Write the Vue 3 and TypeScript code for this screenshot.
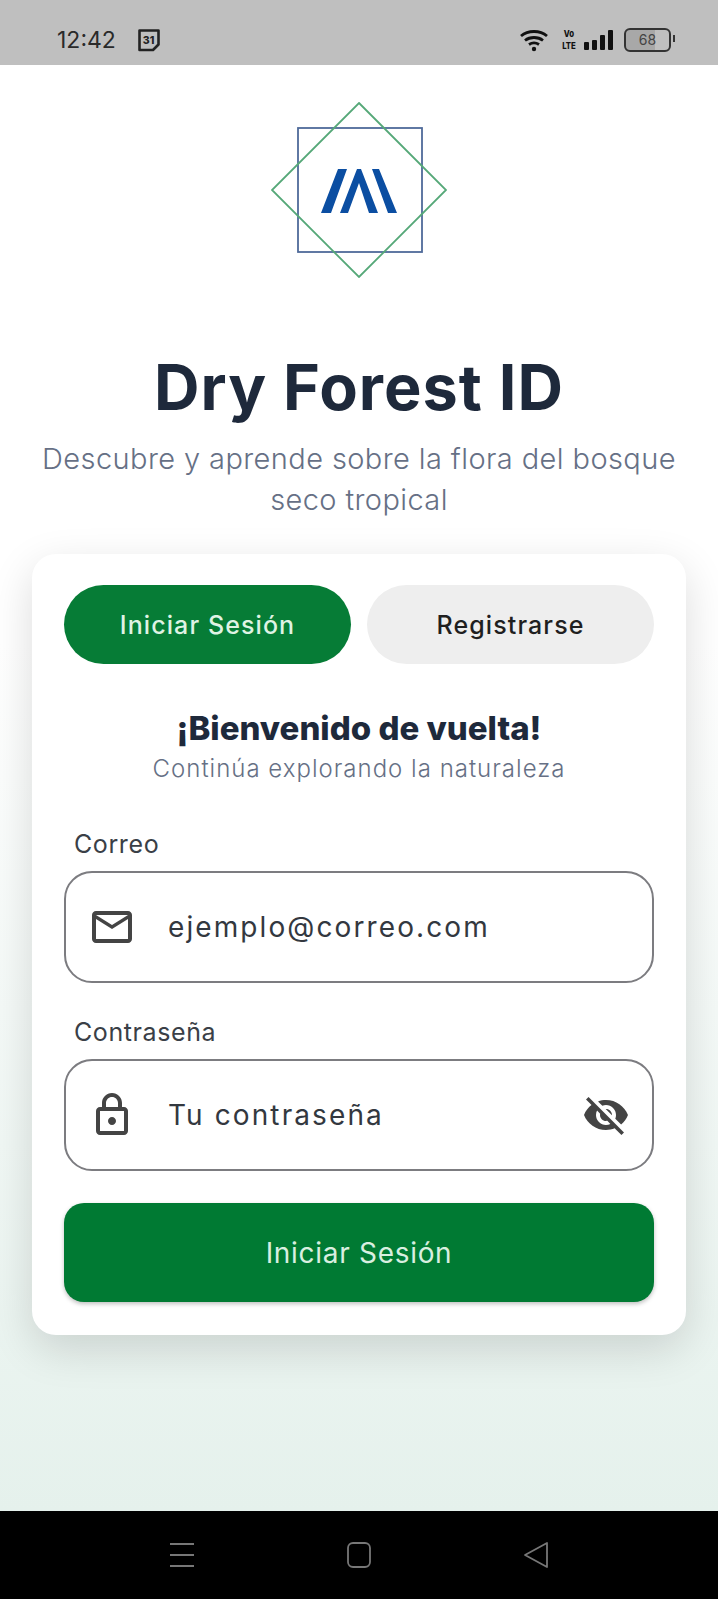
<script setup lang="ts">
const tabs: { label: string; active: boolean }[] = [
  { label: 'Iniciar Sesión', active: true },
  { label: 'Registrarse', active: false },
];
</script>

<template>
  <div class="screen">
    <header class="status">
      <div class="status-left">
        <span class="time">12:42</span>
        <svg class="cal" width="24" height="26" viewBox="0 0 24 26">
          <path d="M2.500 3.500h19v14l-5.500 5.500H2.500z" fill="none" stroke="#222" stroke-width="2.600" stroke-linejoin="round" />
          <text x="11.500" y="17" class="cal-text">31</text>
        </svg>
      </div>
      <div class="status-right">
        <svg class="wifi" width="30" height="24" viewBox="0 0 30 24" fill="none" stroke="#111" stroke-width="2.800">
          <path d="M2 8c7-6 19-6 26 0M6 12.500c5-4 13-4 18 0M10 16.500c3-2 7-2 10 0" />
          <circle cx="15" cy="21" r="2.200" fill="#111" stroke="none" />
        </svg>
        <div class="volte"><span>Vo</span><span>LTE</span></div>
        <svg width="30" height="22" viewBox="0 0 30 22" fill="#111">
          <rect x="0" y="13" width="5" height="8" rx="1" />
          <rect x="8" y="11" width="5" height="10" rx="1" />
          <rect x="16" y="6" width="5" height="15" rx="1" />
          <rect x="24" y="1" width="5" height="20" rx="1" />
        </svg>
        <div class="battery"><span class="battery-level">68</span><i class="battery-cap"></i></div>
      </div>
    </header>

    <main class="content">
      <svg class="logo" width="176" height="176" viewBox="0 0 176 176">
        <rect x="27" y="26" width="124" height="124" fill="none" stroke="#4f6a9a" stroke-width="1.800" />
        <path d="M88 1 175 88 88 175 1 88z" fill="none" stroke="#55a878" stroke-width="1.800" />
        <path d="M67 67h9L60 111H50zM86 67h4l17 44H98L88 81 77 111H69zM101 67h7l18 44h-9z" fill="#0b4ea2" />
      </svg>

      <h1 class="title">Dry Forest ID</h1>
      <p class="subtitle">Descubre y aprende sobre la flora del bosque seco tropical</p>

      <section class="card">
        <div class="tabs">
          <button v-for="tab in tabs" :key="tab.label" class="tab" :class="{ active: tab.active }">{{ tab.label }}</button>
        </div>

        <h2 class="welcome">¡Bienvenido de vuelta!</h2>
        <p class="welcome-sub">Continúa explorando la naturaleza</p>

        <label class="label first">Correo</label>
        <div class="field">
          <svg class="field-icon" width="48" height="48" viewBox="0 0 24 24" fill="#444">
            <path d="M20 4H4c-1.100 0-2 .9-2 2v12c0 1.100.9 2 2 2h16c1.100 0 2-.9 2-2V6c0-1.100-.9-2-2-2zm0 14H4V8l8 5 8-5v10zm-8-7L4 6h16l-8 5z" />
          </svg>
          <span class="field-text">ejemplo@correo.com</span>
        </div>

        <label class="label">Contraseña</label>
        <div class="field">
          <svg class="field-icon" width="48" height="48" viewBox="0 0 24 24" fill="#444">
            <path d="M18 8h-1V6c0-2.760-2.240-5-5-5S7 3.240 7 6v2H6c-1.100 0-2 .9-2 2v10c0 1.100.9 2 2 2h12c1.100 0 2-.9 2-2V10c0-1.100-.9-2-2-2zM9 6c0-1.660 1.340-3 3-3s3 1.340 3 3v2H9V6zm9 14H6V10h12v10zm-6-3c1.100 0 2-.9 2-2s-.9-2-2-2-2 .9-2 2 .9 2 2 2z" />
          </svg>
          <span class="field-text">Tu contraseña</span>
          <svg class="eye" width="48" height="48" viewBox="0 0 24 24" fill="#444">
            <path d="M12 7c2.760 0 5 2.240 5 5 0 .65-.13 1.260-.36 1.830l2.920 2.920c1.510-1.260 2.700-2.890 3.430-4.750-1.730-4.390-6-7.500-11-7.500-1.400 0-2.740.25-3.980.7l2.160 2.160C10.740 7.130 11.350 7 12 7zM2 4.270l2.280 2.280.46.46C3.080 8.300 1.780 10.020 1 12c1.730 4.390 6 7.500 11 7.500 1.550 0 3.030-.3 4.380-.84l.42.42L19.730 22 21 20.730 3.270 3 2 4.270zM7.530 9.800l1.550 1.550c-.05.21-.08.43-.08.65 0 1.660 1.340 3 3 3 .22 0 .44-.03.65-.08l1.550 1.550c-.67.33-1.410.53-2.200.53-2.760 0-5-2.240-5-5 0-.79.2-1.530.53-2.200zm4.310-.78l3.150 3.150.02-.16c0-1.660-1.340-3-3-3l-.17.010z" />
          </svg>
        </div>

        <button class="submit">Iniciar Sesión</button>
      </section>
    </main>

    <footer class="nav">
      <svg width="28" height="28" viewBox="0 0 28 28" stroke="#777" stroke-width="1.800" fill="none">
        <path d="M2 3h24M2 14h24M2 25h24" />
      </svg>
      <svg width="28" height="28" viewBox="0 0 28 28" stroke="#777" stroke-width="1.800" fill="none">
        <rect x="3" y="2" width="22" height="24" rx="5" />
      </svg>
      <svg width="28" height="28" viewBox="0 0 28 28" stroke="#777" stroke-width="1.800" fill="none" stroke-linejoin="round">
        <path d="M25 2v24L3 14z" />
      </svg>
    </footer>
  </div>
</template>

<style scoped>
.screen {
  width: 718px;
  height: 1599px;
  display: flex;
  flex-direction: column;
  overflow: hidden;
  font-family: Inter, "Noto Sans", "Liberation Sans", sans-serif;
}

.status {
  height: 65px;
  flex: none;
  background: #bfbfbf;
  display: flex;
  align-items: center;
  justify-content: space-between;
  padding: 0 47px 0 57px;
}

.status-left,
.status-right {
  display: flex;
  align-items: center;
}

.status-left {
  gap: 21px;
  padding-top: 15px;
}

.status-right {
  gap: 7px;
  padding-top: 14px;
}

.wifi {
  margin-right: 5px;
}

.time {
  font-size: 23px;
  color: #2a2a2a;
}

.cal-text {
  font-size: 10.500px;
  font-weight: 800;
  text-anchor: middle;
  fill: #222;
}

.volte {
  display: flex;
  flex-direction: column;
  align-items: center;
  width: 16px;
  font-size: 9.500px;
  line-height: 11.600px;
  font-weight: 800;
  color: #111;
  transform: scaleX(0.82);
}

.battery {
  position: relative;
  width: 43px;
  height: 20px;
  margin-left: 3px;
  border: 2px solid #333;
  border-radius: 6px;
  background: linear-gradient(90deg, #a8a8a8 68%, transparent 68%);
  display: flex;
  align-items: center;
  justify-content: center;
}

.battery-level {
  font-size: 14px;
  color: #444;
}

.battery-cap {
  position: absolute;
  right: -6px;
  top: 5px;
  width: 2px;
  height: 7px;
  background: #333;
}

.content {
  flex: 1;
  background: linear-gradient(180deg, #ffffff 40%, #e5f1ec 100%);
  display: flex;
  flex-direction: column;
  align-items: center;
  padding: 37px 32px 0;
  box-sizing: border-box;
}

.logo {
  flex: none;
}

.title {
  margin: 71px 0 0;
  font-size: 63px;
  line-height: 76px;
  font-weight: 700;
  letter-spacing: 1px;
  color: #1e293b;
}

.subtitle {
  margin: 13px 0 0;
  width: 650px;
  font-size: 29px;
  line-height: 41px;
  font-weight: 300;
  letter-spacing: 0.4px;
  text-align: center;
  color: #667085;
}

.card {
  width: 654px;
  height: 781px;
  margin-top: 34px;
  box-sizing: border-box;
  padding: 31px 32px 32px;
  background: #fff;
  border-radius: 24px;
  box-shadow: 0 14px 44px rgba(0, 0, 0, 0.14);
  display: flex;
  flex-direction: column;
}

.tabs {
  display: flex;
  gap: 16px;
}

.tab {
  flex: 1;
  height: 79px;
  border: 0;
  border-radius: 40px;
  background: #eeeeee;
  color: #1f1f1f;
  font: 500 25px Inter, "Noto Sans", sans-serif;
  letter-spacing: 1.100px;
}

.tab.active {
  background: #067c36;
  color: #dff3e4;
}

.welcome {
  margin: 44px 0 0;
  font-size: 33px;
  line-height: 40px;
  font-weight: 800;
  text-align: center;
  color: #1e293b;
}

.welcome-sub {
  margin: 6px 0 0;
  font-size: 24px;
  line-height: 30px;
  font-weight: 300;
  letter-spacing: 1px;
  text-align: center;
  color: #667085;
}

.label {
  display: block;
  margin: 32px 0 10px 10px;
  font-size: 25px;
  line-height: 34px;
  letter-spacing: 0.6px;
  color: #3a3f47;
}

.label.first {
  margin-top: 43px;
}

.field {
  height: 112px;
  box-sizing: border-box;
  border: 2px solid #7c7c80;
  border-radius: 28px;
  display: flex;
  align-items: center;
  padding: 0 22px 0 22px;
}

.field-icon {
  flex: none;
}

.field-text {
  flex: 1;
  margin-left: 32px;
  font-size: 28px;
  letter-spacing: 2.100px;
  color: #33383f;
}

.eye {
  flex: none;
}

.submit {
  height: 99px;
  margin-top: 32px;
  flex: none;
  border: 0;
  border-radius: 20px;
  background: #007a33;
  color: #d9efe0;
  font: 400 28px Inter, "Noto Sans", sans-serif;
  letter-spacing: 0.7px;
  box-shadow: 0 2px 4px rgba(0, 0, 0, 0.25);
}

.nav {
  height: 88px;
  flex: none;
  background: #000;
  display: flex;
  align-items: center;
  justify-content: center;
  gap: 149px;
  box-sizing: border-box;
}
</style>
